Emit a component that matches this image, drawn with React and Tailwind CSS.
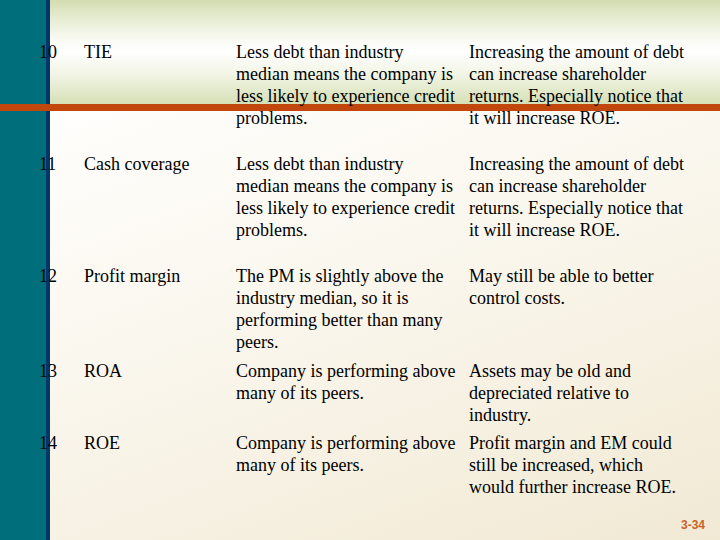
import React from "react";

const rows = [
  {
    n: "10",
    name: "TIE",
    a: ["Less debt than industry", "median means the company is", "less likely to experience credit", "problems."],
    b: ["Increasing the amount of debt", "can increase shareholder", "returns. Especially notice that", "it will increase ROE."],
    h: "h-[112px]",
  },
  {
    n: "11",
    name: "Cash coverage",
    a: ["Less debt than industry", "median means the company is", "less likely to experience credit", "problems."],
    b: ["Increasing the amount of debt", "can increase shareholder", "returns. Especially notice that", "it will increase ROE."],
    h: "h-[112px]",
  },
  {
    n: "12",
    name: "Profit margin",
    a: ["The PM is slightly above the", "industry median, so it is", "performing better than many", "peers."],
    b: ["May still be able to better", "control costs."],
    h: "h-[95px]",
  },
  {
    n: "13",
    name: "ROA",
    a: ["Company is performing above", "many of its peers."],
    b: ["Assets may be old and", "depreciated relative to", "industry."],
    h: "h-[72px]",
  },
  {
    n: "14",
    name: "ROE",
    a: ["Company is performing above", "many of its peers."],
    b: ["Profit margin and EM could", "still be increased, which", "would further increase ROE."],
    h: "h-[80px]",
  },
];

function Lines({ lines }) {
  return (
    <div className="flex flex-col whitespace-nowrap">
      {lines.map((l, i) => (
        <span key={i}>{l}</span>
      ))}
    </div>
  );
}

export default function App() {
  return (
    <div className="relative w-[720px] h-[540px] overflow-hidden">
      {/* slide background */}
      <div className="flex flex-col w-full h-full">
        <div className="flex h-[104px]">
          <div className="w-[46px] bg-[#006f7b]" />
          <div className="w-[4px] bg-[#003768]" />
          <div className="flex-1 bg-[linear-gradient(to_bottom,#d3ddb0_0%,#e8eed6_20%,#fbfcf6_40%,#ffffff_50%,#f1f4e4_72%,#d6e0b6_100%)]" />
        </div>
        <div className="h-[7px] bg-[#c1470d]" />
        <div className="flex flex-1">
          <div className="w-[46px] bg-[#006f7b]" />
          <div className="w-[4px] bg-[#003768]" />
          <div className="flex-1 bg-[linear-gradient(160deg,#fffefc_0%,#fbf8f0_35%,#f5efdf_75%,#f1e9d4_100%)]" />
        </div>
      </div>

      {/* table content */}
      <div
        className="absolute inset-0 flex flex-col pt-[41px] text-[18px] leading-[22px] text-black"
        style={{ fontFamily: '"Liberation Serif", "Times New Roman", serif' }}
      >
        {rows.map((r) => (
          <div key={r.n} className={`flex ${r.h}`}>
            <div className="w-[84px] pl-[39px]">{r.n}</div>
            <div className="w-[152px]">{r.name}</div>
            <div className="w-[233px]">
              <Lines lines={r.a} />
            </div>
            <div className="flex-1">
              <Lines lines={r.b} />
            </div>
          </div>
        ))}
      </div>

      <div
        className="absolute right-[15px] bottom-[9px] text-[12px] font-bold leading-none text-[#c9622c]"
        style={{ fontFamily: '"Liberation Sans", Arial, sans-serif' }}
      >
        3-34
      </div>
    </div>
  );
}
